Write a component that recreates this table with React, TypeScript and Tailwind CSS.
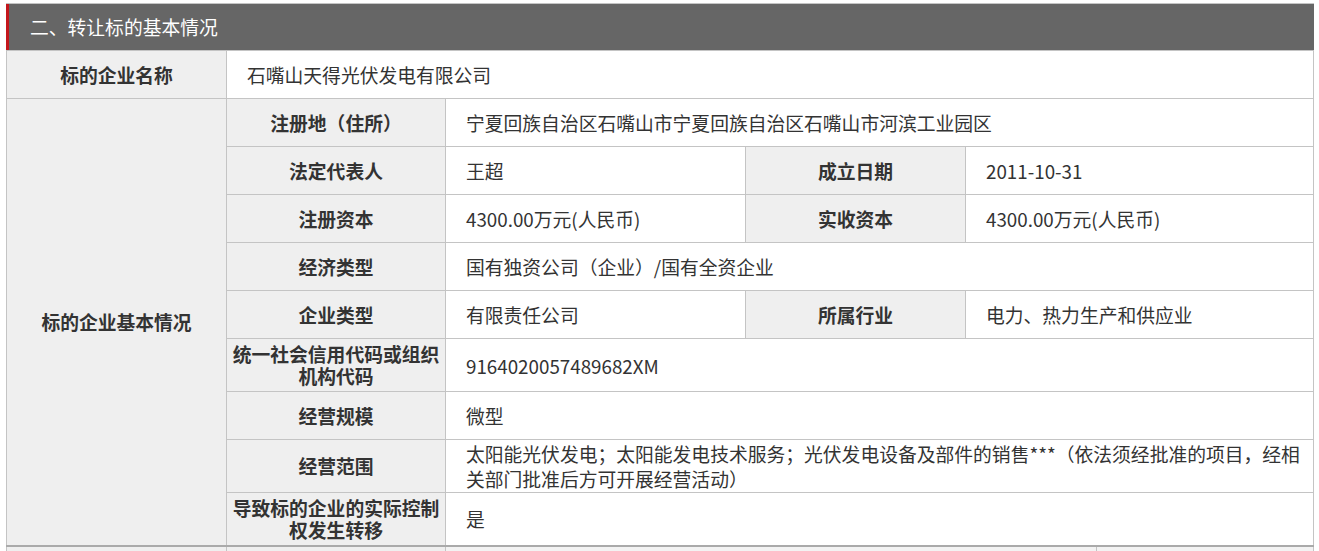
const font = '[font-family:"Noto_Sans_CJK_SC","Noto_Sans",sans-serif]';

function Label({ children, rowSpan, colSpan }: { children: React.ReactNode; rowSpan?: number; colSpan?: number }) {
  return (
    <td
      rowSpan={rowSpan}
      colSpan={colSpan}
      className="border border-[#c4c4c4] bg-[#efefef] px-1 text-center align-middle font-bold leading-[22px] text-[#333]"
    >
      {children}
    </td>
  );
}

function Value({ children, colSpan }: { children: React.ReactNode; colSpan?: number }) {
  return (
    <td colSpan={colSpan} className="border border-[#c4c4c4] bg-white pl-5 pr-2 align-middle leading-[25px] text-[#333]">
      {children}
    </td>
  );
}

export default function App() {
  return (
    <div className={`min-h-screen bg-white pt-[3px] pl-[6px] ${font} text-[18.8px]`}>
      <div className="w-[1308px]">
        <div className="flex h-[47px] border-t border-[#c4c4c4]">
          <div className="w-[3px] bg-[#c3161c]" />
          <div className="flex flex-1 items-center bg-[#666666] pl-[21px] text-white">二、转让标的基本情况</div>
        </div>
        <table className="w-[1308px] table-fixed border-collapse">
          <colgroup>
            <col className="w-[220px]" />
            <col className="w-[219px]" />
            <col className="w-[300px]" />
            <col className="w-[220px]" />
            <col />
          </colgroup>
          <tbody>
            <tr className="h-[48px]">
              <Label>标的企业名称</Label>
              <Value colSpan={4}>石嘴山天得光伏发电有限公司</Value>
            </tr>
            <tr className="h-[48px]">
              <Label rowSpan={9}>标的企业基本情况</Label>
              <Label>注册地（住所）</Label>
              <Value colSpan={3}>宁夏回族自治区石嘴山市宁夏回族自治区石嘴山市河滨工业园区</Value>
            </tr>
            <tr className="h-[48px]">
              <Label>法定代表人</Label>
              <Value>王超</Value>
              <Label>成立日期</Label>
              <Value>2011-10-31</Value>
            </tr>
            <tr className="h-[48px]">
              <Label>注册资本</Label>
              <Value>4300.00万元(人民币)</Value>
              <Label>实收资本</Label>
              <Value>4300.00万元(人民币)</Value>
            </tr>
            <tr className="h-[48px]">
              <Label>经济类型</Label>
              <Value colSpan={3}>国有独资公司（企业）/国有全资企业</Value>
            </tr>
            <tr className="h-[48px]">
              <Label>企业类型</Label>
              <Value>有限责任公司</Value>
              <Label>所属行业</Label>
              <Value>电力、热力生产和供应业</Value>
            </tr>
            <tr className="h-[53px]">
              <Label>
                统一社会信用代码或组织
                <br />
                机构代码
              </Label>
              <Value colSpan={3}>9164020057489682XM</Value>
            </tr>
            <tr className="h-[48px]">
              <Label>经营规模</Label>
              <Value colSpan={3}>微型</Value>
            </tr>
            <tr className="h-[53px]">
              <Label>经营范围</Label>
              <Value colSpan={3}>
                太阳能光伏发电；太阳能发电技术服务；光伏发电设备及部件的销售***（依法须经批准的项目，经相
                <br />
                关部门批准后方可开展经营活动）
              </Value>
            </tr>
            <tr className="h-[53px]">
              <Label>
                导致标的企业的实际控制
                <br />
                权发生转移
              </Label>
              <Value colSpan={3}>是</Value>
            </tr>
            <tr className="h-[48px] border-t-2 border-[#aaaaaa]">
              <td className="border border-[#c4c4c4] bg-[#efefef]" />
              <td className="border border-[#c4c4c4] bg-[#efefef]" />
              <td colSpan={3} className="border border-[#c4c4c4] p-0">
                <div className="flex h-[47px]">
                  <div className="w-[651px] border-r border-[#c4c4c4] bg-[#f3f3f3]" />
                  <div className="flex-1 bg-[#f3f3f3]" />
                </div>
              </td>
            </tr>
          </tbody>
        </table>
      </div>
    </div>
  );
}
